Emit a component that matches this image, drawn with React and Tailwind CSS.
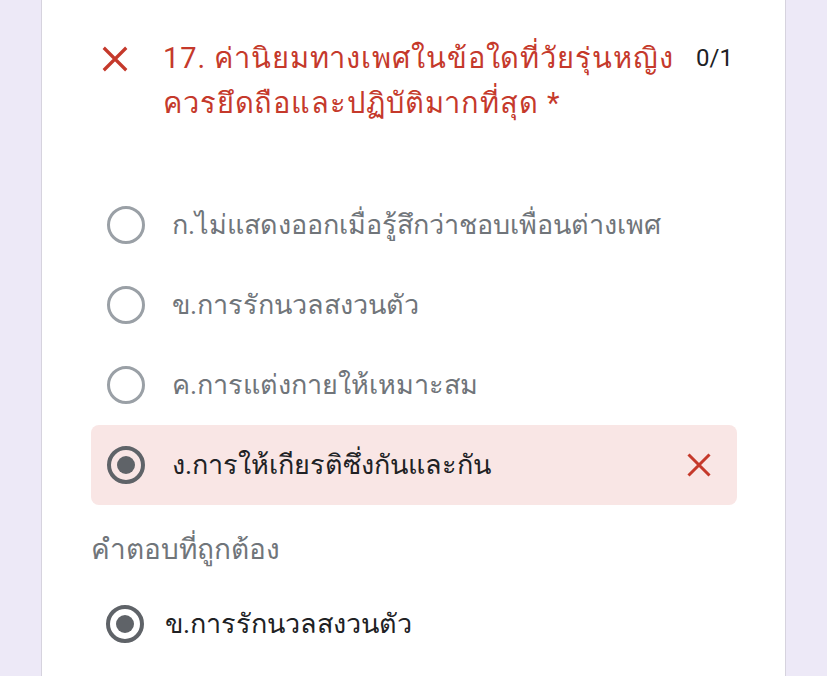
import { useState } from 'react';

const options = [
  'ก.ไม่แสดงออกเมื่อรู้สึกว่าชอบเพื่อนต่างเพศ',
  'ข.การรักนวลสงวนตัว',
  'ค.การแต่งกายให้เหมาะสม',
  'ง.การให้เกียรติซึ่งกันและกัน',
];

function Cross({ className }) {
  return (
    <svg viewBox="0 0 24 24" className={className} fill="none" stroke="currentColor" strokeWidth="2.6">
      <path d="M3 3L21 21M21 3L3 21" />
    </svg>
  );
}

function Radio({ checked }) {
  if (checked) {
    return (
      <div className="w-[38px] h-[38px] shrink-0 rounded-full border-[4px] border-[#5f6368] flex items-center justify-center">
        <div className="w-[18px] h-[18px] rounded-full bg-[#5f6368]" />
      </div>
    );
  }
  return <div className="w-[38px] h-[38px] shrink-0 rounded-full border-[3.5px] border-[#9aa0a6]" />;
}

export default function App() {
  const [selected] = useState(3);

  return (
    <div
      className="h-[676px] overflow-hidden bg-[#ede9f7] flex"
      style={{ fontFamily: 'Roboto, "Noto Sans", "Liberation Sans", sans-serif' }}
    >
      <div className="ml-[41px] w-[745px] h-full bg-white border-x border-[#d6d3de]">
        <div className="flex pt-[36px] pl-[58px] pr-[52px]">
          <Cross className="w-[30px] h-[30px] mt-[8px] shrink-0 text-[#c5392b]" />
          <h2 className="ml-[33px] flex-1 text-[29px] leading-[45px] tracking-[0.9px] whitespace-nowrap text-[#c5392b]">
            17. ค่านิยมทางเพศในข้อใดที่วัยรุ่นหญิง
            <br />
            ควรยึดถือและปฏิบัติมากที่สุด *
          </h2>
          <span className="ml-[20px] text-[24px] leading-[45px] text-[#202124]">0/1</span>
        </div>

        <div className="mt-[59px] ml-[49px] w-[646px]">
          {options.map((text, i) => {
            const isSel = i === selected;
            return (
              <div
                key={i}
                className={`h-[80px] flex items-center pl-[16px] pr-[24px] rounded-lg ${
                  isSel ? 'bg-[#f9e6e5]' : ''
                }`}
              >
                <Radio checked={isSel} />
                <span
                  className={`ml-[27px] flex-1 text-[27px] ${
                    isSel ? 'text-[#202124]' : 'text-[#70757a]'
                  }`}
                >
                  {text}
                </span>
                {isSel && <Cross className="w-[28px] h-[28px] text-[#c5392b]" />}
              </div>
            );
          })}
        </div>

        <div className="mt-[24px] ml-[49px] text-[28px] text-[#70757a]">คำตอบที่ถูกต้อง</div>

        <div className="mt-[33px] ml-[64px] flex items-center">
          <Radio checked />
          <span className="ml-[21px] text-[27px] text-[#202124]">ข.การรักนวลสงวนตัว</span>
        </div>
      </div>
    </div>
  );
}
